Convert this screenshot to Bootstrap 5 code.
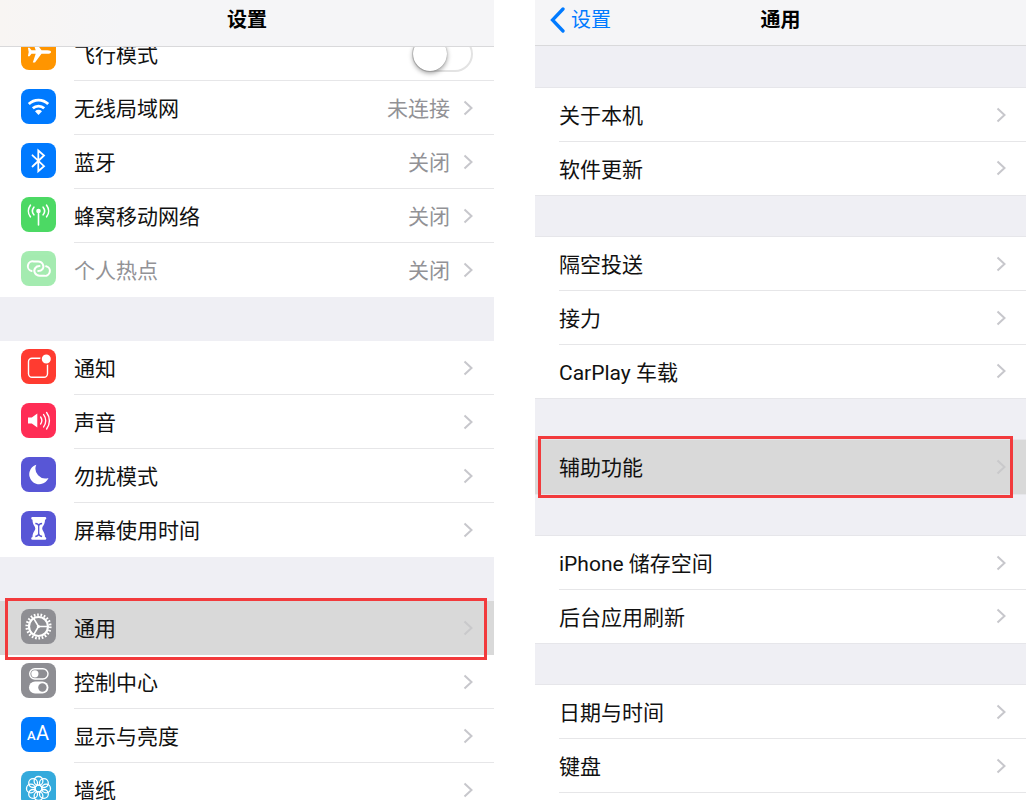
<!DOCTYPE html>
<html lang="zh-CN">
<head>
<meta charset="utf-8">
<meta name="viewport" content="width=device-width, initial-scale=1">
<title>设置</title>
<link href="https://cdn.jsdelivr.net/npm/bootstrap@5.3.0/dist/css/bootstrap.min.css" rel="stylesheet">
<style>
  body { font-family: Roboto, "Noto Sans CJK SC", sans-serif; font-size: 21px; line-height: 30px; color: #111; background: #fff; }
  .screens { display: grid; grid-template-columns: 494fr 491fr; column-gap: 41px; height: 100vh; overflow: hidden; }
  .screen { background: #efeff4; overflow: hidden; min-width: 0; }
  .topbar { height: 47px; padding-bottom: 6px; background: #f5f5f7; border-bottom: 1px solid #d9d9db; z-index: 2; display: grid; grid-template-columns: 1fr auto 1fr; align-items: center; flex: none; }
  .topbar.warm { background: linear-gradient(90deg, #f8f5f3, #f5f5f7 25%); }
  .topbar h1 { font-size: 20px; line-height: 30px; font-weight: 600; margin: 0; grid-column: 2; color: #000; }
  .back { color: #007aff; text-decoration: none; gap: 6px; padding-left: 15px; font-size: 20px; }
  .scrolled { margin-top: -20px; }
  .group + .group { margin-top: 44px; }
  .menu-row { height: 54px; display: flex; align-items: center; color: inherit; text-decoration: none; background: #fff; position: relative; padding-left: 21px; }
  .menu-row .tile { width: 35px; height: 35px; border-radius: 8px; margin: 0 18px 4px 0; flex: none; }
  .body-cell { flex: 1; min-width: 0; align-self: stretch; display: flex; align-items: center; padding-right: 21px; border-bottom: 1px solid #e6e6e8; }
  .group .menu-row:last-child .body-cell, .active-row .body-cell { border-bottom-color: transparent; }
  .label-text { flex: 1; padding-top: 2px; white-space: nowrap; }
  .state { color: #929296; padding-top: 2px; margin-right: 13px; }
  .chev { width: 10px; height: 16px; fill: none; stroke: #c7c7cc; stroke-width: 2; flex: none; }
  .active-row { background: #d9d9d9; z-index: 1; }
  .active-row .chev { stroke: #c9c9cb; }
  .off .label-text { color: #929296; }
  .off .tile { opacity: .5; }
  .plain .topbar { height: 46px; }
  .plain .group { margin-top: 42px; box-shadow: 0 0 0 1px #e6e6ea; background: #fff; }
  .plain .menu-row { padding-left: 24px; }
  .plain .body-cell { padding-right: 20px; }
  .plain .label-text { padding-top: 3px; }
  .plain .menu-row:last-child:not(.active-row) { height: 53px; }
  .plain .group.continues .menu-row:last-child { height: 54px; }
  .plain .group.continues .body-cell { border-bottom-color: #e6e6e8; }
  .mark-box { position: absolute; inset: -3px 7px -5px 5px; border: 3px solid #f23a3c; pointer-events: none; }
  .plain .mark-box { inset: -4px 13px -4px 3px; }
  .toggle { appearance: none; width: 61px; height: 36px; border: 2px solid #e3e3e3; border-radius: 18px; background: #fff; margin: 0; flex: none; }
  .toggle::before { content: ""; display: block; width: 34px; height: 34px; margin: -1px; border-radius: 50%; background: #fff; box-shadow: 0 2px 5px #0006, 0 0 1px #0006; }
  .toggle:checked { background: #4cd964; }
  .toggle:checked::before { margin-left: 24px; }
  .ln { fill: none; stroke: #fff; stroke-linecap: round; stroke-linejoin: round; }
</style>
</head>
<body>
<svg class="d-none" aria-hidden="true"><symbol id="chev" viewBox="0 0 10 16"><path d="M1.5 1.5 8.5 8l-7 6.5"/></symbol></svg>
<main class="screens">
  <section class="screen">
    <header class="topbar warm position-relative"><h1>设置</h1></header>
    <div class="scrolled">
      <div class="group">
        <label class="menu-row">
          <svg class="tile" viewBox="0 0 35 35" style="background:#ff9500"><path fill="#fff" d="M30 17q0 1.700-3.500 1.800h-6L14 27.500h-2.200l2.900-8.700h-4.200l-2 2.400H6.900L7.700 17l-.8-4.200h1.600l2 2.400h4.200l-2.900-8.700H14l6.500 8.700h6Q30 15.300 30 17z"/></svg>
          <span class="body-cell"><span class="label-text">飞行模式</span><input class="toggle" type="checkbox" role="switch"></span>
        </label>
        <a class="menu-row" href="#">
          <svg class="tile" viewBox="0 0 35 35" style="background:#007aff"><path class="ln" stroke-width="2.800" style="stroke-linecap:butt" d="M7.800 15a14 14 0 0 1 19.400 0M11.800 19.300a8.500 8.500 0 0 1 11.400 0"/><path fill="#fff" d="M14 22.300a5.500 5.500 0 0 1 7 0L17.500 26z"/></svg>
          <span class="body-cell"><span class="label-text">无线局域网</span><span class="state">未连接</span><svg class="chev"><use href="#chev"/></svg></span>
        </a>
        <a class="menu-row" href="#">
          <svg class="tile" viewBox="0 0 35 35" style="background:#007aff"><path class="ln" stroke-width="1.800" style="stroke-linejoin:miter" d="M11.500 12.300 23 23.200l-5.700 5V7.500l5.700 5-11.500 11"/></svg>
          <span class="body-cell"><span class="label-text">蓝牙</span><span class="state">关闭</span><svg class="chev"><use href="#chev"/></svg></span>
        </a>
        <a class="menu-row" href="#">
          <svg class="tile" viewBox="0 0 35 35" style="background:#4cd964"><circle cx="17.500" cy="14" r="2.300" fill="#fff"/><path class="ln" stroke-width="1.600" d="M17.500 14v14M12.900 10.200a6 6 0 0 0 0 7.600M22.100 10.200a6 6 0 0 1 0 7.600M9.400 8.200a9.500 9.500 0 0 0 0 11.600M25.600 8.200a9.500 9.500 0 0 1 0 11.600"/></svg>
          <span class="body-cell"><span class="label-text">蜂窝移动网络</span><span class="state">关闭</span><svg class="chev"><use href="#chev"/></svg></span>
        </a>
        <a class="menu-row off" href="#">
          <svg class="tile" viewBox="0 0 35 35" style="background:#4cd964"><path class="ln" stroke-width="2" d="M10.600 20a4.800 4.800 0 0 1 2.200-9.500h4.400c4.200 0 6.500 4.500 4.300 7.600-1 1.400-2.400 2-4.300 2M25.100 15.200a4.800 4.800 0 0 1-2.200 9.500h-4.400c-4.200 0-6.500-4.500-4.300-7.600 1-1.400 2.400-2 4.300-2"/></svg>
          <span class="body-cell"><span class="label-text">个人热点</span><span class="state">关闭</span><svg class="chev"><use href="#chev"/></svg></span>
        </a>
      </div>
      <div class="group">
        <a class="menu-row" href="#">
          <svg class="tile" viewBox="0 0 35 35" style="background:#ff3b30"><rect x="7.500" y="9.200" width="19" height="19" rx="3.500" class="ln" stroke-width="1.400"/><circle cx="25.300" cy="10" r="5.300" fill="#fff" stroke="#ff3b30" stroke-width="1.600"/></svg>
          <span class="body-cell"><span class="label-text">通知</span><svg class="chev"><use href="#chev"/></svg></span>
        </a>
        <a class="menu-row" href="#">
          <svg class="tile" viewBox="0 0 35 35" style="background:#ff2d55"><path fill="#fff" d="M7 14.500h3.800l5.500-4v14l-5.500-4H7z"/><path class="ln" stroke-width="1.400" d="M19.600 14a6 6 0 0 1 0 7M22.600 11.600a10 10 0 0 1 0 12.300M25.600 9.500a13.500 13.500 0 0 1 0 16.500"/></svg>
          <span class="body-cell"><span class="label-text">声音</span><svg class="chev"><use href="#chev"/></svg></span>
        </a>
        <a class="menu-row" href="#">
          <svg class="tile" viewBox="0 0 35 35" style="background:#5856d6"><path fill="#fff" d="M15.300 7.700A10 10 0 1 0 27.500 21 9.900 9.900 0 0 1 15.300 7.700z"/></svg>
          <span class="body-cell"><span class="label-text">勿扰模式</span><svg class="chev"><use href="#chev"/></svg></span>
        </a>
        <a class="menu-row" href="#">
          <svg class="tile" viewBox="0 0 35 35" style="background:#5856d6"><path fill="#fff" d="M11.500 6h12.500q1.300 0 1.300 1.300t-1.300 1.500c0 5.200-2.800 6.400-2.800 8.700s2.800 3.700 2.800 8.500q1.300.2 1.300 1.500T24 28.800H11.500q-1.300 0-1.300-1.300t1.300-1.500c0-4.800 2.800-6.200 2.800-8.500s-2.800-3.500-2.800-8.700q-1.300-.2-1.300-1.500T11.500 6z"/><path fill="none" stroke="#5856d6" stroke-width="1.300" d="M14.300 12.500q3.400.2 3.400 2.500v7.500q0 2.500-3.400 3M21.100 12.500q-3.400.2-3.400 2.500v7.500q0 2.500 3.400 3"/></svg>
          <span class="body-cell"><span class="label-text">屏幕使用时间</span><svg class="chev"><use href="#chev"/></svg></span>
        </a>
      </div>
      <div class="group">
        <a class="menu-row active-row" href="#" aria-current="true">
          <svg class="tile" viewBox="0 0 35 35" style="background:#8e8e93"><g fill="none" stroke="#fff"><circle cx="17.500" cy="17.500" r="9.500" stroke-width="2.200"/><circle cx="17.500" cy="17.500" r="11.700" stroke-width="2.800" stroke-dasharray="1.650 1.690"/><path stroke-width="1.600" d="M17.500 17.500H27M17.500 17.500l-5-8.300M17.500 17.500l-5 8.300"/></g><circle cx="17.500" cy="17.500" r="1.600" fill="#fff"/></svg>
          <span class="body-cell"><span class="label-text">通用</span><svg class="chev"><use href="#chev"/></svg></span>
          <span class="mark-box"></span>
        </a>
        <a class="menu-row" href="#">
          <svg class="tile" viewBox="0 0 35 35" style="background:#8e8e93"><rect x="8.700" y="5.700" width="18.300" height="10.300" rx="5.150" class="ln" stroke-width="1.400"/><circle cx="13.900" cy="10.800" r="3.600" fill="#fff"/><rect x="8" y="18.500" width="19.500" height="12" rx="6" fill="#fff"/><circle cx="21.400" cy="24.500" r="4.200" fill="#8e8e93"/></svg>
          <span class="body-cell"><span class="label-text">控制中心</span><svg class="chev"><use href="#chev"/></svg></span>
        </a>
        <a class="menu-row" href="#">
          <svg class="tile" viewBox="0 0 35 35" style="background:#007aff" font-family="Roboto, sans-serif" fill="#fff"><text x="6" y="23" font-size="13" font-weight="500">A</text><text x="15" y="23" font-size="20">A</text></svg>
          <span class="body-cell"><span class="label-text">显示与亮度</span><svg class="chev"><use href="#chev"/></svg></span>
        </a>
        <a class="menu-row" href="#">
          <svg class="tile" viewBox="0 0 35 35" style="background:#34aadc"><g fill="none" stroke="#fff" stroke-width="1.300"><circle cx="17.500" cy="9.900" r="4.400"/><circle cx="22.900" cy="12.100" r="4.400"/><circle cx="25.100" cy="17.500" r="4.400"/><circle cx="22.900" cy="22.900" r="4.400"/><circle cx="17.500" cy="25.100" r="4.400"/><circle cx="12.100" cy="22.900" r="4.400"/><circle cx="9.900" cy="17.500" r="4.400"/><circle cx="12.100" cy="12.100" r="4.400"/><circle cx="17.500" cy="17.500" r="3.600"/></g></svg>
          <span class="body-cell"><span class="label-text">墙纸</span><svg class="chev"><use href="#chev"/></svg></span>
        </a>
      </div>
    </div>
  </section>

  <section class="screen plain d-flex flex-column">
    <header class="topbar">
      <a class="back d-flex align-items-center" href="#"><svg width="15" height="26" viewBox="0 0 15 26" fill="none" stroke="#007aff" stroke-width="3.300" stroke-linecap="round"><path d="M13 2 2.500 13 13 24"/></svg>设置</a>
      <h1>通用</h1>
    </header>
    <div class="group">
      <a class="menu-row" href="#"><span class="body-cell"><span class="label-text">关于本机</span><svg class="chev"><use href="#chev"/></svg></span></a>
      <a class="menu-row" href="#"><span class="body-cell"><span class="label-text">软件更新</span><svg class="chev"><use href="#chev"/></svg></span></a>
    </div>
    <div class="group">
      <a class="menu-row" href="#"><span class="body-cell"><span class="label-text">隔空投送</span><svg class="chev"><use href="#chev"/></svg></span></a>
      <a class="menu-row" href="#"><span class="body-cell"><span class="label-text">接力</span><svg class="chev"><use href="#chev"/></svg></span></a>
      <a class="menu-row" href="#"><span class="body-cell"><span class="label-text">CarPlay 车载</span><svg class="chev"><use href="#chev"/></svg></span></a>
    </div>
    <div class="group">
      <a class="menu-row active-row" href="#" aria-current="true"><span class="body-cell"><span class="label-text">辅助功能</span><svg class="chev"><use href="#chev"/></svg></span><span class="mark-box"></span></a>
    </div>
    <div class="group">
      <a class="menu-row" href="#"><span class="body-cell"><span class="label-text">iPhone 储存空间</span><svg class="chev"><use href="#chev"/></svg></span></a>
      <a class="menu-row" href="#"><span class="body-cell"><span class="label-text">后台应用刷新</span><svg class="chev"><use href="#chev"/></svg></span></a>
    </div>
    <div class="group continues flex-grow-1">
      <a class="menu-row" href="#"><span class="body-cell"><span class="label-text">日期与时间</span><svg class="chev"><use href="#chev"/></svg></span></a>
      <a class="menu-row" href="#"><span class="body-cell"><span class="label-text">键盘</span><svg class="chev"><use href="#chev"/></svg></span></a>
    </div>
  </section>
</main>
<script src="https://cdn.jsdelivr.net/npm/bootstrap@5.3.0/dist/js/bootstrap.bundle.min.js"></script>
</body>
</html>
